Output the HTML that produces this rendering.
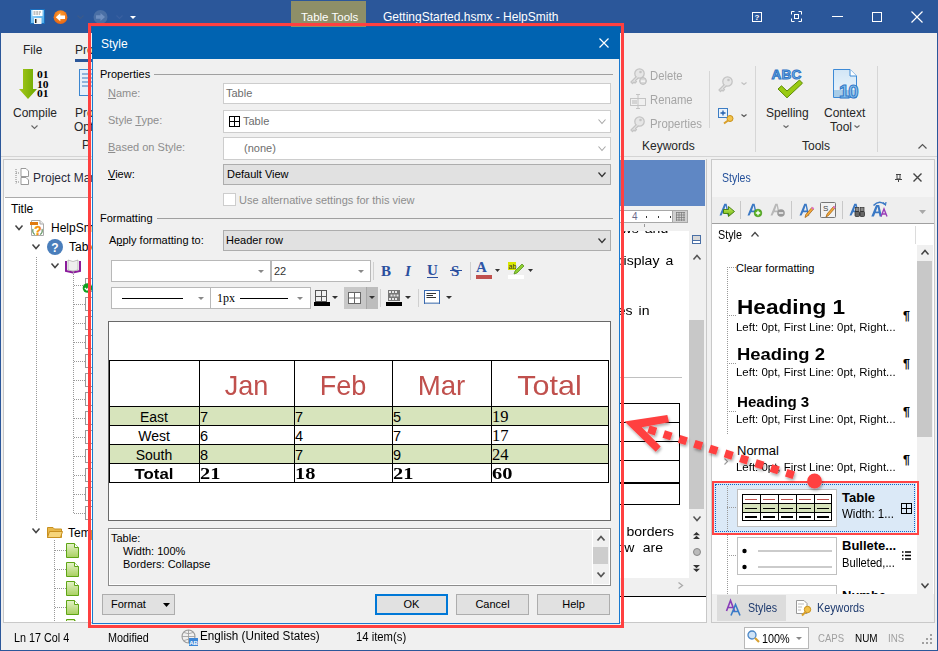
<!DOCTYPE html>
<html><head><meta charset="utf-8"><style>
html,body{margin:0;padding:0;}
body{width:938px;height:651px;overflow:hidden;position:relative;background:#f0f0f0;font-family:"Liberation Sans", sans-serif;}
.a{position:absolute;}
.t{position:absolute;white-space:nowrap;line-height:1;}
svg.a{overflow:visible;}
</style></head><body>

<div class="a" style="left:0px;top:0px;width:938px;height:33px;background:#2b579a;"></div>
<div class="a" style="left:0px;top:0px;width:1px;height:651px;background:#2b579a;"></div>
<div class="a" style="left:937px;top:0px;width:1px;height:651px;background:#2b579a;"></div>
<div class="a" style="left:0px;top:650px;width:938px;height:1px;background:#2b579a;"></div>
<svg class="a" style="left:30px;top:9px;" width="15" height="15" viewBox="0 0 15 15"><defs><linearGradient id="gsv" x1="0" y1="0" x2="1" y2="1"><stop offset="0" stop-color="#a8dcff"/><stop offset="1" stop-color="#4aa8e8"/></linearGradient></defs><rect x="0.5" y="0.5" width="14" height="14" fill="url(#gsv)" stroke="#1a70c0"/><rect x="2.5" y="1" width="10" height="6" fill="#fff"/><path d="M3.5 3 H11.5 M3.5 5 H10" stroke="#666" stroke-width="0.8" stroke-dasharray="2 0.7"/><rect x="4" y="9" width="7.5" height="6" fill="#f4f4f4"/><rect x="5" y="10" width="1.5" height="4" fill="#222"/></svg>
<svg class="a" style="left:53px;top:10px;" width="15" height="15" viewBox="0 0 15 15"><defs><radialGradient id="gbk" cx="0.5" cy="0.35" r="0.7"><stop offset="0" stop-color="#ffa030"/><stop offset="1" stop-color="#e45f10"/></radialGradient></defs><circle cx="7.5" cy="7.2" r="6.9" fill="url(#gbk)"/><path d="M2.8 7.2 L7.3 3.2 L7.3 5.5 L12 5.5 L12 8.9 L7.3 8.9 L7.3 11.2 Z" fill="#fff"/></svg>
<svg class="a" style="left:77px;top:15px;" width="7" height="4" viewBox="0 0 7 4"><path d="M0.5 0.5 L3.5 3.5 L6.5 0.5" fill="none" stroke="#3a5a8c" stroke-width="1.2"/></svg>
<svg class="a" style="left:93px;top:10px;" width="15" height="15" viewBox="0 0 15 15"><circle cx="7.5" cy="7" r="7" fill="#4a6fa5"/><path d="M12 7 L7.5 3 L7.5 5.3 L3 5.3 L3 8.7 L7.5 8.7 L7.5 11 Z" fill="#6f8fc0"/></svg>
<svg class="a" style="left:116px;top:15px;" width="7" height="4" viewBox="0 0 7 4"><path d="M0.5 0.5 L3.5 3.5 L6.5 0.5" fill="none" stroke="#3a60a0" stroke-width="1.1"/></svg>
<svg class="a" style="left:130px;top:16px;" width="6" height="3" viewBox="0 0 6 3"><path d="M0 0 L6 0 L3.0 3 Z" fill="#fff"/></svg>
<div class="a" style="left:291px;top:1px;width:75px;height:27px;background:#8e8f68;"></div>
<div class="t" style="left:301px;top:11.76px;font-size:11.5px;color:#fff;">Table Tools</div>
<div class="t" style="left:383px;top:10.84px;font-size:12px;color:#fff;">GettingStarted.hsmx - HelpSmith</div>
<svg class="a" style="left:752px;top:12px;" width="10" height="10" viewBox="0 0 10 10"><rect x="0.5" y="0.5" width="9" height="9" fill="none" stroke="#fff"/><text x="5" y="8" font-size="8" font-family="Liberation Sans" font-weight="bold" fill="#fff" text-anchor="middle">?</text></svg>
<svg class="a" style="left:791px;top:11px;" width="11" height="11" viewBox="0 0 11 11"><path d="M0.5 3.5 V0.5 H3.5 M7.5 0.5 H10.5 V3.5 M10.5 7.5 V10.5 H7.5 M3.5 10.5 H0.5 V7.5" fill="none" stroke="#fff"/><rect x="3.5" y="3.5" width="4" height="4" fill="none" stroke="#fff"/></svg>
<div class="a" style="left:832px;top:16px;width:11px;height:1px;background:#fff;"></div>
<svg class="a" style="left:872px;top:12px;" width="10" height="10" viewBox="0 0 10 10"><rect x="0.5" y="0.5" width="9" height="9" fill="none" stroke="#fff"/></svg>
<svg class="a" style="left:911px;top:11px;" width="12" height="12" viewBox="0 0 12 12"><path d="M0.5 0.5 L11.5 11.5 M11.5 0.5 L0.5 11.5" stroke="#fff" stroke-width="1.2"/></svg>
<div class="a" style="left:1px;top:33px;width:936px;height:123px;background:#f0f0f0;"></div>
<div class="a" style="left:1px;top:156px;width:936px;height:1px;background:#d4d4d4;"></div>
<div class="t" style="left:23px;top:43.84px;font-size:12px;color:#262626;">File</div>
<div class="t" style="left:75px;top:43.84px;font-size:12px;color:#262626;">Project</div>
<div class="a" style="left:75px;top:59px;width:40px;height:3px;background:#2b579a;"></div>
<svg class="a" style="left:19px;top:69px;" width="31" height="30" viewBox="0 0 31 30"><defs><linearGradient id="ga" x1="0" x2="1"><stop offset="0" stop-color="#a7c81a"/><stop offset="1" stop-color="#6aa800"/></linearGradient></defs><path d="M4 0 H14 V20 H18 L9 30 L0 20 H4 Z" fill="url(#ga)"/><g font-size="11" font-family="Liberation Serif" font-weight="bold" fill="#000" transform="translate(18,0) scale(1.05,1)"><text x="0" y="9">01</text><text x="0" y="18.6">10</text><text x="0" y="28.4">01</text></g></svg>
<div class="t" style="left:13px;top:106.84px;font-size:12px;color:#262626;">Compile</div>
<svg class="a" style="left:31px;top:125px;" width="7" height="4" viewBox="0 0 7 4"><path d="M0.5 0.5 L3.5 3.5 L6.5 0.5" fill="none" stroke="#666" stroke-width="1.1"/></svg>
<svg class="a" style="left:79px;top:69px;" width="14" height="30" viewBox="0 0 14 30"><rect x="0.5" y="0.5" width="13" height="26" fill="#e6f0fa" stroke="#3b86d0"/><rect x="3" y="4" width="10" height="2" fill="#8fb4dc"/><rect x="3" y="8" width="10" height="2" fill="#8fb4dc"/><rect x="3" y="12" width="10" height="2" fill="#8fb4dc"/><rect x="3" y="16" width="10" height="2" fill="#8fb4dc"/></svg>
<div class="t" style="left:75px;top:106.84px;font-size:12px;color:#262626;">Pro</div>
<div class="t" style="left:74px;top:120.84px;font-size:12px;color:#262626;">Opt</div>
<div class="t" style="left:82px;top:138.84px;font-size:12px;color:#262626;">P</div>
<svg class="a" style="left:630px;top:68px;" width="16" height="16" viewBox="0 0 16 16"><path d="M9.5 0.8 A4.7 4.7 0 1 1 9.5 10.2 A4.7 4.7 0 1 1 9.5 0.8 Z" fill="#e6e6e6" stroke="#c4c4c4" stroke-width="1.3"/><circle cx="10.5" cy="4" r="1.3" fill="#c4c4c4"/><path d="M6.5 8.5 L1 14 L2.5 15.5 L4 14 L5 15 L6.5 13.5 L5.5 12.5 L8.5 9.8" fill="#e6e6e6" stroke="#c4c4c4" stroke-width="1.3" stroke-linejoin="round"/></svg>
<svg class="a" style="left:639px;top:77px;" width="8" height="8" viewBox="0 0 8 8"><circle cx="4" cy="4" r="3.4" fill="#d8d8d8" stroke="#bdbdbd"/><rect x="2" y="3.5" width="4" height="1.2" fill="#fff"/></svg>
<div class="t" style="left:650px;top:69.84px;font-size:12px;color:#a6a6a6;transform:scaleX(0.94);transform-origin:0 0;">Delete</div>
<svg class="a" style="left:630px;top:94px;" width="16" height="15" viewBox="0 0 16 15"><rect x="0.5" y="4.5" width="15" height="7" fill="none" stroke="#c4c4c4"/><path d="M8 0.5 V14.5 M6 0.5 H10 M6 14.5 H10" stroke="#c4c4c4"/><rect x="2" y="6" width="5" height="4" fill="#d4d4d4"/></svg>
<div class="t" style="left:650px;top:93.84px;font-size:12px;color:#a6a6a6;transform:scaleX(0.94);transform-origin:0 0;">Rename</div>
<svg class="a" style="left:630px;top:116px;" width="16" height="16" viewBox="0 0 16 16"><path d="M9.5 0.8 A4.7 4.7 0 1 1 9.5 10.2 A4.7 4.7 0 1 1 9.5 0.8 Z" fill="#e6e6e6" stroke="#c4c4c4" stroke-width="1.3"/><circle cx="10.5" cy="4" r="1.3" fill="#c4c4c4"/><path d="M6.5 8.5 L1 14 L2.5 15.5 L4 14 L5 15 L6.5 13.5 L5.5 12.5 L8.5 9.8" fill="#e6e6e6" stroke="#c4c4c4" stroke-width="1.3" stroke-linejoin="round"/></svg>
<div class="t" style="left:650px;top:117.84px;font-size:12px;color:#a6a6a6;transform:scaleX(0.95);transform-origin:0 0;">Properties</div>
<div class="a" style="left:709px;top:71px;width:1px;height:57px;background:#d6d6d6;"></div>
<svg class="a" style="left:718px;top:76px;" width="16" height="16" viewBox="0 0 16 16"><path d="M9.5 0.8 A4.7 4.7 0 1 1 9.5 10.2 A4.7 4.7 0 1 1 9.5 0.8 Z" fill="#e6e6e6" stroke="#c4c4c4" stroke-width="1.3"/><circle cx="10.5" cy="4" r="1.3" fill="#c4c4c4"/><path d="M6.5 8.5 L1 14 L2.5 15.5 L4 14 L5 15 L6.5 13.5 L5.5 12.5 L8.5 9.8" fill="#e6e6e6" stroke="#c4c4c4" stroke-width="1.3" stroke-linejoin="round"/></svg>
<svg class="a" style="left:741px;top:82px;" width="6" height="3" viewBox="0 0 6 3"><path d="M0.5 0.5 L3.0 2.5 L5.5 0.5" fill="none" stroke="#c0c0c0" stroke-width="1.1"/></svg>
<svg class="a" style="left:718px;top:108px;" width="16" height="16" viewBox="0 0 16 16"><rect x="0.5" y="0.5" width="9" height="9" fill="#eaf2fb" stroke="#3c7dc4"/><path d="M5 2.5 V7.5 M2.5 5 H7.5" stroke="#1f5fae" stroke-width="1.3"/><circle cx="12" cy="10.5" r="3" fill="#f3c34a" stroke="#c8901a"/><path d="M10 12.5 L6 15.5" stroke="#d89f2a" stroke-width="2"/></svg>
<svg class="a" style="left:741px;top:114px;" width="6" height="3" viewBox="0 0 6 3"><path d="M0.5 0.5 L3.0 2.5 L5.5 0.5" fill="none" stroke="#555" stroke-width="1.2"/></svg>
<div class="t" style="left:642px;top:139.84px;font-size:12px;color:#262626;">Keywords</div>
<div class="a" style="left:755px;top:66px;width:1px;height:86px;background:#d6d6d6;"></div>
<svg class="a" style="left:771px;top:68px;" width="32" height="32" viewBox="0 0 32 32"><text x="15.5" y="11" font-size="13.5" font-family="Liberation Sans" font-weight="bold" fill="#7cb8ee" stroke="#2f74c4" stroke-width="1" text-anchor="middle" letter-spacing="0.3">ABC</text><path d="M7 21 L10.5 17.8 L16 23 L28.5 12 L31.5 15.2 L16 29.8 Z" fill="#9acb12" stroke="#5f8c08" stroke-width="1" stroke-linejoin="round"/></svg>
<div class="t" style="left:766px;top:106.84px;font-size:12px;color:#262626;">Spelling</div>
<svg class="a" style="left:783px;top:125px;" width="6" height="3" viewBox="0 0 6 3"><path d="M0.5 0.5 L3.0 2.5 L5.5 0.5" fill="none" stroke="#666" stroke-width="1.1"/></svg>
<svg class="a" style="left:833px;top:69px;" width="28" height="31" viewBox="0 0 28 31"><defs><linearGradient id="gct" x1="0" y1="0" x2="0" y2="1"><stop offset="0" stop-color="#d2e6f6"/><stop offset="1" stop-color="#eef6fc"/></linearGradient></defs><path d="M0.5 0.5 H17 L23.5 7 V28.5 H0.5 Z" fill="url(#gct)" stroke="#3d8ad6"/><path d="M17 0.5 V7 H23.5" fill="#fff" stroke="#3d8ad6"/><rect x="1" y="21" width="22" height="7" fill="#a8cde8"/><text x="6" y="28.8" font-size="18.5" font-family="Liberation Sans" font-weight="bold" fill="#8cc4ee" stroke="#2f78c8" stroke-width="1" letter-spacing="-1">10</text></svg>
<div class="t" style="left:824px;top:106.84px;font-size:12px;color:#262626;">Context</div>
<div class="t" style="left:830px;top:120.84px;font-size:12px;color:#262626;">Tool</div>
<svg class="a" style="left:854px;top:125px;" width="6" height="3" viewBox="0 0 6 3"><path d="M0.5 0.5 L3.0 2.5 L5.5 0.5" fill="none" stroke="#666" stroke-width="1.1"/></svg>
<div class="t" style="left:802px;top:139.84px;font-size:12px;color:#262626;">Tools</div>
<div class="a" style="left:877px;top:66px;width:1px;height:86px;background:#d6d6d6;"></div>
<svg class="a" style="left:918px;top:144px;" width="9" height="5" viewBox="0 0 9 5"><path d="M0.5 4.5 L4.5 0.5 L8.5 4.5" fill="none" stroke="#555" stroke-width="1.2"/></svg>
<div class="a" style="left:3px;top:159px;width:620px;height:464px;background:#fff;border:1px solid #c9c9c9;box-sizing:border-box;"></div>
<div class="a" style="left:4px;top:160px;width:618px;height:37px;background:#f5f5f5;"></div>
<div class="a" style="left:5px;top:197px;width:616px;height:1px;background:#ababab;"></div>
<svg class="a" style="left:15px;top:168px;" width="14" height="17" viewBox="0 0 14 17"><path d="M1 1 V15.5 M1 5 H4 M1 14 H4" stroke="#888" stroke-dasharray="1 1"/><path d="M6 0.5 H11 L13.5 3 V8.5 H6 Z" fill="#fff" stroke="#999"/><path d="M6 9.5 H11 L13.5 12 V16.5 H6 Z" fill="#fff" stroke="#999"/></svg>
<div class="t" style="left:33px;top:171.84px;font-size:12px;color:#2a2a3a;">Project Manager</div>
<div class="t" style="left:11px;top:202.84px;font-size:12px;color:#000;">Title</div>
<svg class="a" style="left:15px;top:225px;" width="8" height="5" viewBox="0 0 8 5"><path d="M0.5 0.5 L4.0 4.5 L7.5 0.5" fill="none" stroke="#444" stroke-width="1.5"/></svg>
<svg class="a" style="left:29px;top:219px;" width="16" height="18" viewBox="0 0 16 18"><path d="M2.5 1.5 H11 L14.5 5 V16.5 H2.5 Z" fill="#fff" stroke="#aaa"/><path d="M11 1.5 V5 H14.5" fill="#eee" stroke="#aaa"/><path d="M4 10 Q3 14 6 15.5 M13 10 Q14 14 11 15.5" fill="none" stroke="#6a9a6a" stroke-width="1.3"/><rect x="1" y="3" width="8" height="3" fill="#e07a10"/><text x="9" y="16" font-size="12" font-weight="bold" font-family="Liberation Sans" fill="#f07a10" stroke="#f8b020" stroke-width="0.4" text-anchor="middle">?</text></svg>
<div class="t" style="left:51px;top:221.84px;font-size:12px;color:#000;">HelpSmith</div>
<svg class="a" style="left:32px;top:244px;" width="8" height="5" viewBox="0 0 8 5"><path d="M0.5 0.5 L4.0 4.5 L7.5 0.5" fill="none" stroke="#444" stroke-width="1.5"/></svg>
<svg class="a" style="left:47px;top:239px;" width="16" height="16" viewBox="0 0 16 16"><circle cx="8" cy="8" r="8" fill="#4a7ebb"/><text x="8" y="12.5" font-size="12" font-weight="bold" font-family="Liberation Sans" fill="#fff" text-anchor="middle">?</text></svg>
<div class="t" style="left:69px;top:240.84px;font-size:12px;color:#000;">Table of Contents</div>
<div class="a" style="left:36px;top:257px;width:1px;height:264px;background-image:linear-gradient(#999 50%, transparent 50%);background-size:1px 2px;"></div>
<svg class="a" style="left:51px;top:263px;" width="8" height="5" viewBox="0 0 8 5"><path d="M0.5 0.5 L4.0 4.5 L7.5 0.5" fill="none" stroke="#444" stroke-width="1.5"/></svg>
<svg class="a" style="left:65px;top:259px;" width="16" height="14" viewBox="0 0 16 14"><path d="M1 2 V12 L8 13.5 L15 12 V2" fill="none" stroke="#8b1c9c" stroke-width="2"/><path d="M3 1 L8 2.5 L13 1 V11 L8 12 L3 11 Z" fill="#eee" stroke="#999" stroke-width="0.6"/></svg>
<div class="a" style="left:73px;top:272px;width:1px;height:241px;background-image:linear-gradient(#999 50%, transparent 50%);background-size:1px 2px;"></div>
<div class="a" style="left:74px;top:285px;width:12px;height:1px;background-image:linear-gradient(90deg,#999 50%, transparent 50%);background-size:2px 1px;"></div>
<div class="a" style="left:85px;top:278px;width:8px;height:14px;background:#fff;border:1px solid #999;box-sizing:border-box;"></div>
<div class="a" style="left:74px;top:304px;width:12px;height:1px;background-image:linear-gradient(90deg,#999 50%, transparent 50%);background-size:2px 1px;"></div>
<div class="a" style="left:85px;top:297px;width:8px;height:14px;background:#fff;border:1px solid #999;box-sizing:border-box;"></div>
<div class="a" style="left:74px;top:323px;width:12px;height:1px;background-image:linear-gradient(90deg,#999 50%, transparent 50%);background-size:2px 1px;"></div>
<div class="a" style="left:85px;top:316px;width:8px;height:14px;background:#fff;border:1px solid #999;box-sizing:border-box;"></div>
<div class="a" style="left:74px;top:342px;width:12px;height:1px;background-image:linear-gradient(90deg,#999 50%, transparent 50%);background-size:2px 1px;"></div>
<div class="a" style="left:85px;top:335px;width:8px;height:14px;background:#fff;border:1px solid #999;box-sizing:border-box;"></div>
<div class="a" style="left:74px;top:361px;width:12px;height:1px;background-image:linear-gradient(90deg,#999 50%, transparent 50%);background-size:2px 1px;"></div>
<div class="a" style="left:85px;top:354px;width:8px;height:14px;background:#fff;border:1px solid #999;box-sizing:border-box;"></div>
<div class="a" style="left:74px;top:380px;width:12px;height:1px;background-image:linear-gradient(90deg,#999 50%, transparent 50%);background-size:2px 1px;"></div>
<div class="a" style="left:85px;top:373px;width:8px;height:14px;background:#fff;border:1px solid #999;box-sizing:border-box;"></div>
<div class="a" style="left:74px;top:399px;width:12px;height:1px;background-image:linear-gradient(90deg,#999 50%, transparent 50%);background-size:2px 1px;"></div>
<div class="a" style="left:85px;top:392px;width:8px;height:14px;background:#fff;border:1px solid #999;box-sizing:border-box;"></div>
<div class="a" style="left:74px;top:418px;width:12px;height:1px;background-image:linear-gradient(90deg,#999 50%, transparent 50%);background-size:2px 1px;"></div>
<div class="a" style="left:85px;top:411px;width:8px;height:14px;background:#fff;border:1px solid #999;box-sizing:border-box;"></div>
<div class="a" style="left:74px;top:437px;width:12px;height:1px;background-image:linear-gradient(90deg,#999 50%, transparent 50%);background-size:2px 1px;"></div>
<div class="a" style="left:85px;top:430px;width:8px;height:14px;background:#fff;border:1px solid #999;box-sizing:border-box;"></div>
<div class="a" style="left:74px;top:456px;width:12px;height:1px;background-image:linear-gradient(90deg,#999 50%, transparent 50%);background-size:2px 1px;"></div>
<div class="a" style="left:85px;top:449px;width:8px;height:14px;background:#fff;border:1px solid #999;box-sizing:border-box;"></div>
<div class="a" style="left:74px;top:475px;width:12px;height:1px;background-image:linear-gradient(90deg,#999 50%, transparent 50%);background-size:2px 1px;"></div>
<div class="a" style="left:85px;top:468px;width:8px;height:14px;background:#fff;border:1px solid #999;box-sizing:border-box;"></div>
<div class="a" style="left:74px;top:494px;width:12px;height:1px;background-image:linear-gradient(90deg,#999 50%, transparent 50%);background-size:2px 1px;"></div>
<div class="a" style="left:85px;top:487px;width:8px;height:14px;background:#fff;border:1px solid #999;box-sizing:border-box;"></div>
<div class="a" style="left:74px;top:513px;width:12px;height:1px;background-image:linear-gradient(90deg,#999 50%, transparent 50%);background-size:2px 1px;"></div>
<div class="a" style="left:85px;top:506px;width:8px;height:14px;background:#fff;border:1px solid #999;box-sizing:border-box;"></div>
<svg class="a" style="left:82px;top:283px;" width="11" height="11" viewBox="0 0 11 11"><circle cx="5.5" cy="5" r="4.8" fill="#10a020"/><path d="M2.8 5 L5 7 L8 3" fill="none" stroke="#fff" stroke-width="1.3"/></svg>
<svg class="a" style="left:32px;top:528px;" width="8" height="5" viewBox="0 0 8 5"><path d="M0.5 0.5 L4.0 4.5 L7.5 0.5" fill="none" stroke="#444" stroke-width="1.5"/></svg>
<svg class="a" style="left:47px;top:526px;" width="16" height="12" viewBox="0 0 16 12"><path d="M0.5 1.5 H6 L7.5 3 H14.5 V11.5 H0.5 Z" fill="#e8b84a" stroke="#c89020"/><path d="M2.5 5.5 H15.5 L13.5 11.5 H0.5 Z" fill="#f7d57a" stroke="#c89020"/></svg>
<div class="t" style="left:68px;top:526.84px;font-size:12px;color:#000;">Templates</div>
<div class="a" style="left:54px;top:540px;width:1px;height:81px;background-image:linear-gradient(#999 50%, transparent 50%);background-size:1px 2px;"></div>
<div class="a" style="left:55px;top:550px;width:11px;height:1px;background-image:linear-gradient(90deg,#999 50%, transparent 50%);background-size:2px 1px;"></div>
<div class="a" style="left:66px;top:543px;width:14px;height:15px;overflow:hidden;">
<svg class="a" style="left:0px;top:0px;" width="13" height="15" viewBox="0 0 13 15"><defs><linearGradient id="gp" x1="0" y1="0" x2="0" y2="1"><stop offset="0" stop-color="#e4f2c8"/><stop offset="1" stop-color="#a8d060"/></linearGradient></defs><path d="M0.5 0.5 H8.5 L12.5 4.5 V14.5 H0.5 Z" fill="url(#gp)" stroke="#5ea514"/><path d="M8.5 0.5 V4.5 H12.5" fill="#fff" stroke="#5ea514"/></svg>
</div>
<div class="a" style="left:55px;top:569px;width:11px;height:1px;background-image:linear-gradient(90deg,#999 50%, transparent 50%);background-size:2px 1px;"></div>
<div class="a" style="left:66px;top:562px;width:14px;height:15px;overflow:hidden;">
<svg class="a" style="left:0px;top:0px;" width="13" height="15" viewBox="0 0 13 15"><defs><linearGradient id="gp" x1="0" y1="0" x2="0" y2="1"><stop offset="0" stop-color="#e4f2c8"/><stop offset="1" stop-color="#a8d060"/></linearGradient></defs><path d="M0.5 0.5 H8.5 L12.5 4.5 V14.5 H0.5 Z" fill="url(#gp)" stroke="#5ea514"/><path d="M8.5 0.5 V4.5 H12.5" fill="#fff" stroke="#5ea514"/></svg>
</div>
<div class="a" style="left:55px;top:588px;width:11px;height:1px;background-image:linear-gradient(90deg,#999 50%, transparent 50%);background-size:2px 1px;"></div>
<div class="a" style="left:66px;top:581px;width:14px;height:15px;overflow:hidden;">
<svg class="a" style="left:0px;top:0px;" width="13" height="15" viewBox="0 0 13 15"><defs><linearGradient id="gp" x1="0" y1="0" x2="0" y2="1"><stop offset="0" stop-color="#e4f2c8"/><stop offset="1" stop-color="#a8d060"/></linearGradient></defs><path d="M0.5 0.5 H8.5 L12.5 4.5 V14.5 H0.5 Z" fill="url(#gp)" stroke="#5ea514"/><path d="M8.5 0.5 V4.5 H12.5" fill="#fff" stroke="#5ea514"/></svg>
</div>
<div class="a" style="left:55px;top:607px;width:11px;height:1px;background-image:linear-gradient(90deg,#999 50%, transparent 50%);background-size:2px 1px;"></div>
<div class="a" style="left:66px;top:600px;width:14px;height:15px;overflow:hidden;">
<svg class="a" style="left:0px;top:0px;" width="13" height="15" viewBox="0 0 13 15"><defs><linearGradient id="gp" x1="0" y1="0" x2="0" y2="1"><stop offset="0" stop-color="#e4f2c8"/><stop offset="1" stop-color="#a8d060"/></linearGradient></defs><path d="M0.5 0.5 H8.5 L12.5 4.5 V14.5 H0.5 Z" fill="url(#gp)" stroke="#5ea514"/><path d="M8.5 0.5 V4.5 H12.5" fill="#fff" stroke="#5ea514"/></svg>
</div>
<div class="a" style="left:66px;top:619px;width:14px;height:2px;overflow:hidden;">
<svg class="a" style="left:0px;top:0px;" width="13" height="15" viewBox="0 0 13 15"><defs><linearGradient id="gp" x1="0" y1="0" x2="0" y2="1"><stop offset="0" stop-color="#e4f2c8"/><stop offset="1" stop-color="#a8d060"/></linearGradient></defs><path d="M0.5 0.5 H8.5 L12.5 4.5 V14.5 H0.5 Z" fill="url(#gp)" stroke="#5ea514"/><path d="M8.5 0.5 V4.5 H12.5" fill="#fff" stroke="#5ea514"/></svg>
</div>
<div class="a" style="left:560px;top:159px;width:147px;height:464px;background:#f0f0f0;"></div>
<div class="a" style="left:560px;top:160px;width:145px;height:46px;background:#5f87c4;"></div>
<div class="a" style="left:706px;top:159px;width:1px;height:464px;background:#c8c8c8;"></div>
<div class="a" style="left:560px;top:210px;width:113px;height:13px;background:#fff;border:1px solid #a8a8a8;box-sizing:border-box;"></div>
<div class="t" style="left:632px;top:211.53px;font-size:10px;color:#6b6b8a;">4</div>
<div class="a" style="left:646px;top:216px;width:1px;height:2px;background:#333;"></div>
<div class="a" style="left:658px;top:216px;width:1px;height:2px;background:#333;"></div>
<div class="a" style="left:670px;top:216px;width:1px;height:2px;background:#333;"></div>
<div class="a" style="left:672px;top:210px;width:16px;height:13px;background:#d0d0d0;border:1px solid #a8a8a8;box-sizing:border-box;"></div>
<svg class="a" style="left:676px;top:212px;" width="9" height="9" viewBox="0 0 9 9"><path d="M0 0.5 H9 M0 3 H9 M0 5.5 H9 M0 8 H9 M0.5 0 V9 M3 0 V9 M5.5 0 V9 M8 0 V9" stroke="#777" stroke-width="0.7"/></svg>
<div class="a" style="left:644px;top:224px;width:1px;height:3px;background:#999;"></div>
<div class="a" style="left:560px;top:231px;width:129px;height:347px;overflow:hidden;background:#fff;"><div class="t" style="right:21px;top:-9px;font-size:13px;word-spacing:2px;transform:scaleX(1.08);transform-origin:100% 0;">ws and</div><div class="t" style="right:16px;top:22.6px;font-size:13px;word-spacing:2px;transform:scaleX(1.08);transform-origin:100% 0;">display a</div><div class="t" style="right:40px;top:72.5px;font-size:13px;word-spacing:2px;transform:scaleX(1.08);transform-origin:100% 0;">es in</div><div class="t" style="right:15px;top:293.6px;font-size:13px;transform:scaleX(1.08);transform-origin:100% 0;">borders</div><div class="t" style="right:26px;top:309.6px;font-size:13px;word-spacing:4px;transform:scaleX(1.08);transform-origin:100% 0;">ow are</div></div>
<div class="a" style="left:560px;top:377px;width:122px;height:1px;background:#c0c0c0;"></div>
<div class="a" style="left:560px;top:403px;width:120px;height:102px;border:1px solid #000;box-sizing:border-box;"></div>
<div class="a" style="left:560px;top:422px;width:120px;height:1px;background:#000;"></div>
<div class="a" style="left:560px;top:441px;width:120px;height:1px;background:#000;"></div>
<div class="a" style="left:560px;top:460px;width:120px;height:1px;background:#000;"></div>
<div class="a" style="left:560px;top:482px;width:120px;height:2px;background:#000;"></div>
<div class="a" style="left:689px;top:230px;width:16px;height:364px;background:#f0f0f0;"></div>
<svg class="a" style="left:692px;top:235px;" width="9" height="9" viewBox="0 0 9 9"><rect x="0.5" y="0.5" width="8" height="8" fill="#d8d8d8" stroke="#4a6fa5"/><path d="M1 5.5 H8" stroke="#4a6fa5"/><rect x="1" y="6" width="7" height="2" fill="#fff"/></svg>
<svg class="a" style="left:693px;top:255px;" width="8" height="5" viewBox="0 0 8 5"><path d="M0.5 4.5 L4.0 0.5 L7.5 4.5" fill="none" stroke="#555" stroke-width="1.5"/></svg>
<div class="a" style="left:689px;top:320px;width:15px;height:189px;background:#c8c8c8;"></div>
<svg class="a" style="left:693px;top:516px;" width="8" height="5" viewBox="0 0 8 5"><path d="M0.5 0.5 L4.0 4.5 L7.5 0.5" fill="none" stroke="#555" stroke-width="1.5"/></svg>
<svg class="a" style="left:693px;top:532px;" width="7" height="7" viewBox="0 0 7 7"><path d="M0 3.2 L3.5 0 L7 3.2 Z M0 7 L3.5 3.8 L7 7 Z" fill="#333"/></svg>
<svg class="a" style="left:693px;top:548px;" width="8" height="8" viewBox="0 0 8 8"><circle cx="4" cy="4" r="3.5" fill="#bbb" stroke="#888"/></svg>
<svg class="a" style="left:693px;top:565px;" width="7" height="7" viewBox="0 0 7 7"><path d="M0 0 L3.5 3.2 L7 0 Z M0 3.8 L3.5 7 L7 3.8 Z" fill="#333"/></svg>
<svg class="a" style="left:678px;top:582px;" width="5" height="7" viewBox="0 0 5 7"><path d="M0.5 0.5 L4.5 3.5 L0.5 6.5" fill="none" stroke="#aaa" stroke-width="1.3"/></svg>
<div class="a" style="left:560px;top:596px;width:146px;height:1px;background:#000;"></div>
<div class="a" style="left:560px;top:597px;width:146px;height:25px;background:#fff;"></div>
<div class="a" style="left:560px;top:622px;width:147px;height:1px;background:#c8c8c8;"></div>
<div class="a" style="left:711px;top:159px;width:224px;height:464px;background:#fff;border:1px solid #c9c9c9;box-sizing:border-box;"></div>
<div class="a" style="left:712px;top:160px;width:222px;height:37px;background:#f5f5f5;"></div>
<div class="t" style="left:722px;top:171.84px;font-size:12px;color:#24509a;transform:scaleX(0.88);transform-origin:0 0;">Styles</div>
<svg class="a" style="left:895px;top:174px;" width="7" height="8" viewBox="0 0 7 8"><path d="M1 0.5 H6 M2 0.5 V5 H5 V0.5 M0 5.5 H7 M3.5 5.5 V8" fill="none" stroke="#444" stroke-width="1"/></svg>
<svg class="a" style="left:913px;top:173px;" width="9" height="9" viewBox="0 0 9 9"><path d="M0.5 0.5 L8.5 8.5 M8.5 0.5 L0.5 8.5" stroke="#444" stroke-width="1.4"/></svg>
<div class="a" style="left:712px;top:197px;width:222px;height:26px;background:#eeeeee;"></div>
<div class="a" style="left:712px;top:223px;width:222px;height:1px;background:#a0a0a0;"></div>
<svg class="a" style="left:719px;top:203px;" width="12" height="13" viewBox="0 0 12 13"><path d="M0.5 12.5 L5.3 0.8 H7.6 L10.2 12.5 H8.6 L7.9 9.2 H4.1 L2.5 12.5 Z M4.9 7.6 H7.6 L6.7 2.5 Z" fill="#3a78c4" fill-rule="evenodd"/></svg>
<svg class="a" style="left:723px;top:206px;" width="12" height="11" viewBox="0 0 12 11"><defs><linearGradient id="gar" x1="0" y1="0" x2="0" y2="1"><stop offset="0" stop-color="#c8f060"/><stop offset="1" stop-color="#6cb010"/></linearGradient></defs><path d="M0.5 3.5 H5.5 V0.5 L11.5 5.5 L5.5 10.5 V7.5 H0.5 Z" fill="url(#gar)" stroke="#3d7a0a" stroke-width="0.9"/></svg>
<div class="a" style="left:740px;top:201px;width:1px;height:18px;background:#c8c8c8;"></div>
<svg class="a" style="left:747px;top:203px;" width="12" height="13" viewBox="0 0 12 13"><path d="M0.5 12.5 L5.3 0.8 H7.6 L10.2 12.5 H8.6 L7.9 9.2 H4.1 L2.5 12.5 Z M4.9 7.6 H7.6 L6.7 2.5 Z" fill="#3a78c4" fill-rule="evenodd"/></svg>
<svg class="a" style="left:754px;top:209px;" width="8" height="8" viewBox="0 0 8 8"><circle cx="4" cy="4" r="3.8" fill="#5ab424" stroke="#3d8a10" stroke-width="0.6"/><path d="M4 1.8 V6.2 M1.8 4 H6.2" stroke="#fff" stroke-width="1.3"/></svg>
<svg class="a" style="left:770px;top:203px;" width="12" height="13" viewBox="0 0 12 13"><path d="M0.5 12.5 L5.3 0.8 H7.6 L10.2 12.5 H8.6 L7.9 9.2 H4.1 L2.5 12.5 Z M4.9 7.6 H7.6 L6.7 2.5 Z" fill="#b8b8b8" fill-rule="evenodd"/></svg>
<svg class="a" style="left:777px;top:209px;" width="8" height="8" viewBox="0 0 8 8"><circle cx="4" cy="4" r="3.8" fill="#9a9a9a"/><path d="M1.8 4 H6.2" stroke="#fff" stroke-width="1.3"/></svg>
<div class="a" style="left:791px;top:201px;width:1px;height:18px;background:#c8c8c8;"></div>
<svg class="a" style="left:799px;top:203px;" width="12" height="13" viewBox="0 0 12 13"><path d="M0.5 12.5 L5.3 0.8 H7.6 L10.2 12.5 H8.6 L7.9 9.2 H4.1 L2.5 12.5 Z M4.9 7.6 H7.6 L6.7 2.5 Z" fill="#3a78c4" fill-rule="evenodd"/></svg>
<svg class="a" style="left:804px;top:206px;" width="10" height="12" viewBox="0 0 10 12"><path d="M1 11.5 L1.8 8.5 L7.8 1.5 L9.6 3 L3.6 10 Z" fill="#f3a93a" stroke="#9a5a10" stroke-width="0.7"/><path d="M7.8 1.5 L9.6 3" stroke="#e070c8" stroke-width="2"/></svg>
<svg class="a" style="left:820px;top:202px;" width="16" height="16" viewBox="0 0 16 16"><rect x="0.5" y="0.5" width="15" height="15" rx="1" fill="#f2f2f2" stroke="#777"/><text x="3" y="8.5" font-size="8" font-family="Liberation Sans" fill="#444">S</text><path d="M6 15 L7 12 L13.5 4.5 L15 6 L8.5 13.5 Z" fill="#f3a93a" stroke="#9a5a10" stroke-width="0.7"/><path d="M13.5 4.5 L15 6" stroke="#e070c8" stroke-width="2"/></svg>
<div class="a" style="left:842px;top:201px;width:1px;height:18px;background:#c8c8c8;"></div>
<svg class="a" style="left:849px;top:203px;" width="12" height="13" viewBox="0 0 12 13"><path d="M0.5 12.5 L5.3 0.8 H7.6 L10.2 12.5 H8.6 L7.9 9.2 H4.1 L2.5 12.5 Z M4.9 7.6 H7.6 L6.7 2.5 Z" fill="#3a78c4" fill-rule="evenodd"/></svg>
<svg class="a" style="left:855px;top:207px;" width="10" height="10" viewBox="0 0 10 10"><rect x="0.5" y="0.5" width="3.5" height="4" fill="#888" stroke="#333" stroke-width="0.7"/><rect x="5.5" y="0.5" width="3.5" height="4" fill="#888" stroke="#333" stroke-width="0.7"/><rect x="0" y="4.5" width="4.5" height="5" rx="1" fill="#666" stroke="#222" stroke-width="0.7"/><rect x="5" y="4.5" width="4.5" height="5" rx="1" fill="#666" stroke="#222" stroke-width="0.7"/></svg>
<svg class="a" style="left:871px;top:201px;" width="17" height="16" viewBox="0 0 17 16"><path d="M2.5 4.5 Q8 -1.5 14 3.5" fill="none" stroke="#3a78c4" stroke-width="1.6"/><path d="M12 1.5 L14.5 4 L15 1" fill="none" stroke="#3a78c4" stroke-width="1.2"/><path d="M0.3 15.5 L5 4 H8.2 L11 15.5 H8.6 L7.9 12.3 H4.2 L2.9 15.5 Z M4.9 10.4 H7.5 L6.6 5.8 Z" fill="#3a78c4" fill-rule="evenodd"/><path d="M10 15.5 L13 8 L16 15.5 M11 13 H15" fill="none" stroke="#9a3cb8" stroke-width="1.4"/></svg>
<svg class="a" style="left:919px;top:210px;" width="7" height="4" viewBox="0 0 7 4"><path d="M0 0 L7 0 L3.5 4 Z" fill="#a8a8a8"/></svg>
<div class="t" style="left:718px;top:228.84px;font-size:12px;color:#000;transform:scaleX(0.9);transform-origin:0 0;">Style</div>
<svg class="a" style="left:751px;top:232px;" width="8" height="5" viewBox="0 0 8 5"><path d="M0.5 4.5 L4.0 0.5 L7.5 4.5" fill="none" stroke="#444" stroke-width="1.2"/></svg>
<div class="a" style="left:915px;top:226px;width:1px;height:18px;background:#dcdcdc;"></div>
<div class="a" style="left:917px;top:245px;width:16px;height:350px;background:#f0f0f0;"></div>
<svg class="a" style="left:921px;top:250px;" width="8" height="5" viewBox="0 0 8 5"><path d="M0.5 4.5 L4.0 0.5 L7.5 4.5" fill="none" stroke="#444" stroke-width="1.5"/></svg>
<div class="a" style="left:917px;top:261px;width:15px;height:176px;background:#c8c8c8;"></div>
<svg class="a" style="left:921px;top:583px;" width="8" height="5" viewBox="0 0 8 5"><path d="M0.5 0.5 L4.0 4.5 L7.5 0.5" fill="none" stroke="#444" stroke-width="1.5"/></svg>
<div class="a" style="left:727px;top:267px;width:1px;height:168px;background-image:linear-gradient(#999 50%, transparent 50%);background-size:1px 2px;"></div>
<div class="a" style="left:727px;top:267px;width:9px;height:1px;background-image:linear-gradient(90deg,#999 50%, transparent 50%);background-size:2px 1px;"></div>
<div class="a" style="left:727px;top:315px;width:10px;height:1px;background-image:linear-gradient(90deg,#999 50%, transparent 50%);background-size:2px 1px;"></div>
<div class="a" style="left:727px;top:363px;width:10px;height:1px;background-image:linear-gradient(90deg,#999 50%, transparent 50%);background-size:2px 1px;"></div>
<div class="a" style="left:727px;top:411px;width:10px;height:1px;background-image:linear-gradient(90deg,#999 50%, transparent 50%);background-size:2px 1px;"></div>
<div class="t" style="left:736px;top:262.69px;font-size:11px;color:#000;">Clear formatting</div>
<div class="t" style="left:737px;top:298.49px;font-size:19.5px;color:#000;font-weight:bold;transform:scaleX(1.16);transform-origin:0 0;">Heading 1</div>
<div class="t" style="left:736px;top:321.69px;font-size:11px;color:#000;transform:scaleX(1.04);transform-origin:0 0;">Left: 0pt, First Line: 0pt, Right...</div>
<div class="t" style="left:903px;top:310.42px;font-size:12.5px;color:#000;font-weight:bold;">&para;</div>
<div class="t" style="left:737px;top:347.45px;font-size:16px;color:#000;font-weight:bold;transform:scaleX(1.15);transform-origin:0 0;">Heading 2</div>
<div class="t" style="left:736px;top:366.69px;font-size:11px;color:#000;transform:scaleX(1.04);transform-origin:0 0;">Left: 0pt, First Line: 0pt, Right...</div>
<div class="t" style="left:903px;top:358.42px;font-size:12.5px;color:#000;font-weight:bold;">&para;</div>
<div class="t" style="left:737px;top:395.15px;font-size:14px;color:#000;font-weight:bold;transform:scaleX(1.08);transform-origin:0 0;">Heading 3</div>
<div class="t" style="left:736px;top:413.69px;font-size:11px;color:#000;transform:scaleX(1.04);transform-origin:0 0;">Left: 0pt, First Line: 0pt, Right...</div>
<div class="t" style="left:903px;top:406.42px;font-size:12.5px;color:#000;font-weight:bold;">&para;</div>
<div class="t" style="left:737px;top:443.99px;font-size:13px;color:#000;">Normal</div>
<svg class="a" style="left:724px;top:458px;" width="4" height="7" viewBox="0 0 4 7"><path d="M0.5 0.5 L3.5 3.5 L0.5 6.5" fill="none" stroke="#999" stroke-width="1.1"/></svg>
<div class="t" style="left:736px;top:461.69px;font-size:11px;color:#000;transform:scaleX(1.04);transform-origin:0 0;">Left: 0pt, First Line: 0pt, Right...</div>
<div class="t" style="left:903px;top:454.42px;font-size:12.5px;color:#000;font-weight:bold;">&para;</div>
<div class="a" style="left:714px;top:483px;width:202px;height:50px;background:#dbe9f7;"></div>
<div class="a" style="left:715px;top:484px;width:200px;height:48px;border:1px dotted #0a64c8;box-sizing:border-box;"></div>
<div class="a" style="left:727px;top:486px;width:1px;height:46px;background-image:linear-gradient(#999 50%, transparent 50%);background-size:1px 2px;"></div>
<div class="a" style="left:727px;top:507px;width:10px;height:1px;background-image:linear-gradient(90deg,#999 50%, transparent 50%);background-size:2px 1px;"></div>
<div class="a" style="left:737px;top:489px;width:100px;height:38px;background:#fff;border:1px solid #c0c0c0;box-sizing:border-box;"></div>
<svg class="a" style="left:742px;top:494px;" width="90" height="27" viewBox="0 0 90 27"><rect x="0.5" y="0.5" width="89" height="26" fill="#fff" stroke="#000"/><rect x="1" y="10" width="88" height="8" fill="#d6e3bc"/><path d="M18.5 0 V27" stroke="#000"/><path d="M36.5 0 V27" stroke="#000"/><path d="M54.5 0 V27" stroke="#000"/><path d="M72.5 0 V27" stroke="#000"/><path d="M0 9.5 H90 M0 18.5 H90" stroke="#000"/><path d="M3 5.5 H15" stroke="#c0504d" stroke-width="1"/><path d="M3 14.5 H15" stroke="#000" stroke-width="1"/><path d="M3 23 H15" stroke="#000" stroke-width="2"/><path d="M21 5.5 H33" stroke="#c0504d" stroke-width="1"/><path d="M21 14.5 H33" stroke="#000" stroke-width="1"/><path d="M21 23 H33" stroke="#000" stroke-width="2"/><path d="M39 5.5 H51" stroke="#c0504d" stroke-width="1"/><path d="M39 14.5 H51" stroke="#000" stroke-width="1"/><path d="M39 23 H51" stroke="#000" stroke-width="2"/><path d="M57 5.5 H69" stroke="#c0504d" stroke-width="1"/><path d="M57 14.5 H69" stroke="#000" stroke-width="1"/><path d="M57 23 H69" stroke="#000" stroke-width="2"/><path d="M75 5.5 H87" stroke="#c0504d" stroke-width="1"/><path d="M75 14.5 H87" stroke="#000" stroke-width="1"/><path d="M75 23 H87" stroke="#000" stroke-width="2"/></svg>
<div class="t" style="left:842px;top:490.99px;font-size:13px;color:#000;font-weight:bold;">Table</div>
<div class="t" style="left:842px;top:508.34px;font-size:12px;color:#000;transform:scaleX(0.96);transform-origin:0 0;">Width: 1...</div>
<svg class="a" style="left:901px;top:503px;" width="11" height="11" viewBox="0 0 11 11"><rect x="0.5" y="0.5" width="10" height="10" fill="none" stroke="#000"/><path d="M5.5 0 V11 M0 5.5 H11" stroke="#000"/></svg>
<div class="a" style="left:727px;top:535px;width:1px;height:60px;background-image:linear-gradient(#999 50%, transparent 50%);background-size:1px 2px;"></div>
<div class="a" style="left:727px;top:555px;width:10px;height:1px;background-image:linear-gradient(90deg,#999 50%, transparent 50%);background-size:2px 1px;"></div>
<div class="a" style="left:737px;top:537px;width:100px;height:38px;background:#fff;border:1px solid #c0c0c0;box-sizing:border-box;"></div>
<svg class="a" style="left:742px;top:547px;" width="92" height="24" viewBox="0 0 92 24"><circle cx="2.5" cy="4" r="2.2" fill="#000"/><circle cx="2.5" cy="20" r="2.2" fill="#000"/><path d="M16 4 H90 M16 20 H90" stroke="#bbb" stroke-width="1.5"/></svg>
<div class="t" style="left:842px;top:538.99px;font-size:13px;color:#000;font-weight:bold;">Bullete...</div>
<div class="t" style="left:842px;top:556.84px;font-size:12px;color:#000;transform:scaleX(0.93);transform-origin:0 0;">Bulleted,...</div>
<svg class="a" style="left:902px;top:551px;" width="9" height="9" viewBox="0 0 9 9"><path d="M0 1 H1.5 M3 1 H9 M0 4.5 H1.5 M3 4.5 H9 M0 8 H1.5 M3 8 H9" stroke="#000" stroke-width="1.3"/></svg>
<div class="a" style="left:737px;top:585px;width:100px;height:10px;background:#fff;border:1px solid #c0c0c0;border-bottom:none;box-sizing:border-box;"></div>
<div class="a" style="left:842px;top:586px;width:80px;height:9px;overflow:hidden;"><div class="t" style="left:0;top:3px;font-size:13px;font-weight:bold;">Numbe...</div></div>
<div class="a" style="left:712px;top:594px;width:222px;height:28px;background:#f0f0f0;"></div>
<div class="a" style="left:717px;top:595px;width:69px;height:26px;background:#dcdcdc;"></div>
<svg class="a" style="left:726px;top:600px;" width="16" height="16" viewBox="0 0 16 16"><path d="M0.5 11 L4.5 0.5 L8.5 11 M2 7.5 H7" fill="none" stroke="#8a3cb8" stroke-width="1.6"/><path d="M5 15.5 L9.5 4.5 L14 15.5 M6.5 11.5 H12.5" fill="none" stroke="#3a7cc8" stroke-width="1.6"/></svg>
<div class="t" style="left:748px;top:601.84px;font-size:12px;color:#1e3a6e;transform:scaleX(0.89);transform-origin:0 0;">Styles</div>
<svg class="a" style="left:796px;top:600px;" width="16" height="16" viewBox="0 0 16 16"><path d="M0.5 0.5 H8 L11 3.5 V13.5 H0.5 Z" fill="#fff" stroke="#999"/><path d="M2 4 H8 M2 7 H6 M2 10 H5" stroke="#bbb"/><circle cx="11.5" cy="9.5" r="3.2" fill="#f2c14a" stroke="#c8901a"/><path d="M9.5 12 L6 15.5" stroke="#d89f2a" stroke-width="2"/></svg>
<div class="t" style="left:817px;top:601.84px;font-size:12px;color:#1e3a6e;transform:scaleX(0.9);transform-origin:0 0;">Keywords</div>
<div class="t" style="left:14px;top:631.84px;font-size:12px;color:#000;transform:scaleX(0.9);transform-origin:0 0;">Ln 17 Col 4</div>
<div class="t" style="left:108px;top:631.84px;font-size:12px;color:#000;transform:scaleX(0.9);transform-origin:0 0;">Modified</div>
<svg class="a" style="left:181px;top:629px;" width="17" height="17" viewBox="0 0 17 17"><circle cx="7.5" cy="7.5" r="6.5" fill="none" stroke="#999" stroke-width="1.1"/><path d="M1 7.5 H14 M7.5 1 V14 M3 3.5 Q7.5 6 12 3.5 M3 11.5 Q7.5 9 12 11.5" fill="none" stroke="#999" stroke-width="0.8"/><rect x="8" y="9" width="9" height="8" fill="#3d86d6"/><text x="12.5" y="15.5" font-size="6" font-family="Liberation Sans" font-weight="bold" fill="#fff" text-anchor="middle">AB</text></svg>
<div class="t" style="left:200px;top:629.84px;font-size:12px;color:#000;transform:scaleX(0.975);transform-origin:0 0;">English (United States)</div>
<div class="t" style="left:356px;top:630.84px;font-size:12px;color:#000;transform:scaleX(0.94);transform-origin:0 0;">14 item(s)</div>
<div class="a" style="left:744px;top:627px;width:65px;height:22px;background:#fff;border:1px solid #b8b8b8;box-sizing:border-box;"></div>
<svg class="a" style="left:747px;top:630px;" width="13" height="13" viewBox="0 0 13 13"><circle cx="5" cy="5" r="4" fill="#cfe3f7" stroke="#4a86c6" stroke-width="1.3"/><path d="M8 8 L12 12" stroke="#d8a030" stroke-width="2.2"/></svg>
<div class="t" style="left:762px;top:632.84px;font-size:12px;color:#000;transform:scaleX(0.9);transform-origin:0 0;">100%</div>
<svg class="a" style="left:796px;top:637px;" width="6" height="3" viewBox="0 0 6 3"><path d="M0 0 L6 0 L3.0 3 Z" fill="#888"/></svg>
<div class="t" style="left:818px;top:632.69px;font-size:11px;color:#a0a0a0;transform:scaleX(0.87);transform-origin:0 0;">CAPS</div>
<div class="t" style="left:855px;top:632.69px;font-size:11px;color:#000;transform:scaleX(0.9);transform-origin:0 0;">NUM</div>
<div class="t" style="left:888px;top:632.69px;font-size:11px;color:#a0a0a0;transform:scaleX(0.89);transform-origin:0 0;">INS</div>
<svg class="a" style="left:922px;top:634px;" width="10" height="10" viewBox="0 0 10 10"><g fill="#a0a0a0"><rect x="8" y="0" width="2" height="2"/><rect x="4" y="4" width="2" height="2"/><rect x="8" y="4" width="2" height="2"/><rect x="0" y="8" width="2" height="2"/><rect x="4" y="8" width="2" height="2"/><rect x="8" y="8" width="2" height="2"/></g></svg>
<div class="a" style="left:92px;top:27px;width:528px;height:597px;background:#f0f0f0;border:1px solid #1a7ad0;box-sizing:border-box;"></div>
<div class="a" style="left:92px;top:27px;width:528px;height:32px;background:#0063b1;"></div>
<div class="t" style="left:101px;top:37.84px;font-size:12px;color:#fff;">Style</div>
<svg class="a" style="left:599px;top:38px;" width="10" height="10" viewBox="0 0 10 10"><path d="M0.5 0.5 L9.5 9.5 M9.5 0.5 L0.5 9.5" stroke="#fff" stroke-width="1.2"/></svg>
<div class="t" style="left:100px;top:68.69px;font-size:11px;color:#000;">Properties</div>
<div class="a" style="left:154px;top:74px;width:459px;height:1px;background:#a0a0a0;"></div>
<div class="t" style="left:108px;top:87.69px;font-size:11px;color:#8d8d8d;"><u>N</u>ame:</div>
<div class="t" style="left:108px;top:114.69px;font-size:11px;color:#8d8d8d;">Style <u>T</u>ype:</div>
<div class="t" style="left:108px;top:141.69px;font-size:11px;color:#8d8d8d;"><u>B</u>ased on Style:</div>
<div class="t" style="left:108px;top:168.69px;font-size:11px;color:#000;"><u>V</u>iew:</div>
<div class="a" style="left:223px;top:83px;width:388px;height:21px;background:#fff;border:1px solid #cdcdcd;box-sizing:border-box;"></div>
<div class="t" style="left:226px;top:87.69px;font-size:11px;color:#6d6d6d;">Table</div>
<div class="a" style="left:223px;top:110px;width:388px;height:23px;background:#fff;border:1px solid #cdcdcd;box-sizing:border-box;"></div>
<svg class="a" style="left:229px;top:116px;" width="11" height="11" viewBox="0 0 11 11"><rect x="0.5" y="0.5" width="10" height="10" fill="none" stroke="#000"/><path d="M5.5 0 V11 M0 5.5 H11" stroke="#000"/></svg>
<div class="t" style="left:243px;top:115.69px;font-size:11px;color:#6d6d6d;">Table</div>
<svg class="a" style="left:598px;top:119px;" width="8" height="5" viewBox="0 0 8 5"><path d="M0.5 0.5 L4.0 4.5 L7.5 0.5" fill="none" stroke="#a8a8a8" stroke-width="1.1"/></svg>
<div class="a" style="left:223px;top:137px;width:388px;height:23px;background:#fff;border:1px solid #cdcdcd;box-sizing:border-box;"></div>
<div class="t" style="left:244px;top:142.69px;font-size:11px;color:#6d6d6d;">(none)</div>
<svg class="a" style="left:598px;top:146px;" width="8" height="5" viewBox="0 0 8 5"><path d="M0.5 0.5 L4.0 4.5 L7.5 0.5" fill="none" stroke="#a8a8a8" stroke-width="1.1"/></svg>
<div class="a" style="left:223px;top:164px;width:388px;height:21px;background:#e1e1e1;border:1px solid #adadad;box-sizing:border-box;"></div>
<div class="t" style="left:227px;top:168.69px;font-size:11px;color:#000;">Default View</div>
<svg class="a" style="left:598px;top:172px;" width="8" height="5" viewBox="0 0 8 5"><path d="M0.5 0.5 L4.0 4.5 L7.5 0.5" fill="none" stroke="#333" stroke-width="1.2"/></svg>
<div class="a" style="left:223px;top:193px;width:13px;height:13px;background:#fff;border:1px solid #cdcdcd;box-sizing:border-box;"></div>
<div class="t" style="left:239px;top:194.69px;font-size:11px;color:#8d8d8d;">Use alternative settings for this view</div>
<div class="t" style="left:100px;top:212.69px;font-size:11px;color:#000;">Formatting</div>
<div class="a" style="left:157px;top:218px;width:456px;height:1px;background:#a0a0a0;"></div>
<div class="t" style="left:109px;top:234.69px;font-size:11px;color:#000;">A<u>p</u>ply formatting to:</div>
<div class="a" style="left:223px;top:230px;width:388px;height:21px;background:#e1e1e1;border:1px solid #adadad;box-sizing:border-box;"></div>
<div class="t" style="left:226px;top:234.69px;font-size:11px;color:#000;">Header row</div>
<svg class="a" style="left:598px;top:238px;" width="8" height="5" viewBox="0 0 8 5"><path d="M0.5 0.5 L4.0 4.5 L7.5 0.5" fill="none" stroke="#333" stroke-width="1.2"/></svg>
<div class="a" style="left:111px;top:260px;width:160px;height:22px;background:#fff;border:1px solid #b8b8b8;box-sizing:border-box;"></div>
<svg class="a" style="left:258px;top:270px;" width="6" height="3" viewBox="0 0 6 3"><path d="M0 0 L6 0 L3.0 3 Z" fill="#888"/></svg>
<div class="a" style="left:271px;top:260px;width:100px;height:22px;background:#fff;border:1px solid #b8b8b8;box-sizing:border-box;"></div>
<div class="t" style="left:274px;top:265.69px;font-size:11px;color:#333;">22</div>
<svg class="a" style="left:358px;top:270px;" width="6" height="3" viewBox="0 0 6 3"><path d="M0 0 L6 0 L3.0 3 Z" fill="#888"/></svg>
<div class="a" style="left:373px;top:262px;width:1px;height:18px;background:#d0d0d0;"></div>
<div class="t" style="left:381px;top:263.94px;font-size:15px;color:#2b4f9e;font-weight:bold;font-family:'Liberation Serif', serif;">B</div>
<div class="t" style="left:405px;top:263.94px;font-size:15px;color:#2b4f9e;font-weight:bold;font-family:'Liberation Serif', serif;font-style:italic;">I</div>
<div class="t" style="left:427px;top:263.44px;font-size:15px;color:#2b4f9e;font-weight:bold;font-family:'Liberation Serif', serif;">U</div>
<div class="a" style="left:427px;top:277px;width:11px;height:1px;background:#2b4f9e;"></div>
<div class="t" style="left:451px;top:263.94px;font-size:15px;color:#2b4f9e;font-weight:bold;font-family:'Liberation Serif', serif;">S</div>
<div class="a" style="left:450px;top:270px;width:12px;height:1px;background:#2b4f9e;"></div>
<div class="a" style="left:470px;top:262px;width:1px;height:18px;background:#d0d0d0;"></div>
<div class="t" style="left:476px;top:260.44px;font-size:15px;color:#2e56a6;font-weight:bold;font-family:'Liberation Serif', serif;">A</div>
<div class="a" style="left:476px;top:275px;width:16px;height:4px;background:#c0504d;"></div>
<svg class="a" style="left:495px;top:269px;" width="5" height="3" viewBox="0 0 5 3"><path d="M0 0 L5 0 L2.5 3 Z" fill="#333"/></svg>
<svg class="a" style="left:508px;top:262px;" width="18" height="17" viewBox="0 0 18 17"><rect x="0" y="0" width="8" height="8" fill="#d8e800"/><text x="0.5" y="7" font-size="7" font-family="Liberation Sans" fill="#333">ab</text><path d="M6 12 L7 9 L14 2 L16 4 L9 11 Z" fill="#8ecf30" stroke="#4a8a10" stroke-width="0.7"/><rect x="0" y="13" width="16" height="4" fill="#fff"/></svg>
<svg class="a" style="left:528px;top:269px;" width="5" height="3" viewBox="0 0 5 3"><path d="M0 0 L5 0 L2.5 3 Z" fill="#333"/></svg>
<div class="a" style="left:111px;top:287px;width:100px;height:22px;background:#fff;border:1px solid #b8b8b8;box-sizing:border-box;"></div>
<div class="a" style="left:122px;top:298px;width:61px;height:1px;background:#000;"></div>
<svg class="a" style="left:198px;top:297px;" width="6" height="3" viewBox="0 0 6 3"><path d="M0 0 L6 0 L3.0 3 Z" fill="#888"/></svg>
<div class="a" style="left:210px;top:287px;width:101px;height:22px;background:#fff;border:1px solid #b8b8b8;box-sizing:border-box;"></div>
<div class="t" style="left:217px;top:291.95px;font-size:12px;color:#000;font-family:'Liberation Serif', serif;">1px</div>
<div class="a" style="left:240px;top:298px;width:48px;height:1px;background:#000;"></div>
<svg class="a" style="left:297px;top:297px;" width="6" height="3" viewBox="0 0 6 3"><path d="M0 0 L6 0 L3.0 3 Z" fill="#888"/></svg>
<svg class="a" style="left:315px;top:290px;" width="12" height="12" viewBox="0 0 12 12"><rect x="0.5" y="0.5" width="11" height="11" fill="none" stroke="#555"/><path d="M6.5 0 V12 M0 6.5 H12" stroke="#555"/></svg>
<div class="a" style="left:314px;top:302px;width:16px;height:4px;background:#000;"></div>
<svg class="a" style="left:332px;top:296px;" width="6" height="3" viewBox="0 0 6 3"><path d="M0 0 L6 0 L3.0 3 Z" fill="#333"/></svg>
<div class="a" style="left:344px;top:287px;width:34px;height:22px;background:#c8c8c8;"></div>
<div class="a" style="left:367px;top:287px;width:11px;height:22px;background:#bdbdbd;"></div>
<div class="a" style="left:366px;top:287px;width:1px;height:22px;background:#a8a8a8;"></div>
<svg class="a" style="left:348px;top:292px;" width="13" height="12" viewBox="0 0 13 12"><rect x="0.5" y="0.5" width="12" height="11" fill="#fff" stroke="#666"/><path d="M6.5 0 V12 M0 6 H13" stroke="#666"/></svg>
<svg class="a" style="left:369px;top:296px;" width="6" height="3" viewBox="0 0 6 3"><path d="M0 0 L6 0 L3.0 3 Z" fill="#333"/></svg>
<div class="a" style="left:380px;top:289px;width:1px;height:18px;background:#d0d0d0;"></div>
<svg class="a" style="left:388px;top:290px;" width="12" height="11" viewBox="0 0 12 11"><rect x="0" y="0" width="12" height="11" fill="#777"/><g fill="#e8e8e8"><rect x="1" y="1" width="2" height="2"/><rect x="4" y="1" width="2" height="2"/><rect x="7" y="1" width="2" height="2"/><rect x="2.5" y="4.5" width="2" height="2"/><rect x="5.5" y="4.5" width="2" height="2"/><rect x="8.5" y="4.5" width="2" height="2"/><rect x="1" y="8" width="2" height="2"/><rect x="4" y="8" width="2" height="2"/><rect x="7" y="8" width="2" height="2"/></g></svg>
<div class="a" style="left:386px;top:302px;width:16px;height:4px;background:#000;"></div>
<svg class="a" style="left:405px;top:296px;" width="6" height="3" viewBox="0 0 6 3"><path d="M0 0 L6 0 L3.0 3 Z" fill="#333"/></svg>
<div class="a" style="left:418px;top:289px;width:1px;height:18px;background:#d0d0d0;"></div>
<svg class="a" style="left:424px;top:290px;" width="16" height="14" viewBox="0 0 16 14"><rect x="0.5" y="0.5" width="15" height="13" fill="#fff" stroke="#3a6ab0"/><rect x="1" y="12" width="14" height="1.5" fill="#b8c8dc"/><path d="M2.5 3.5 H12 M2.5 5.5 H9 M2.5 7.5 H12" stroke="#333"/></svg>
<svg class="a" style="left:446px;top:296px;" width="6" height="3" viewBox="0 0 6 3"><path d="M0 0 L6 0 L3.0 3 Z" fill="#333"/></svg>
<div class="a" style="left:108px;top:321px;width:503px;height:200px;background:#fff;border:1px solid #696969;box-sizing:border-box;"></div>
<div class="a" style="left:109px;top:406px;width:500px;height:19px;background:#d7e4bc;"></div>
<div class="a" style="left:109px;top:444px;width:500px;height:19px;background:#d7e4bc;"></div>
<div class="a" style="left:109px;top:360px;width:500px;height:1px;background:#000;"></div>
<div class="a" style="left:109px;top:406px;width:500px;height:1px;background:#000;"></div>
<div class="a" style="left:109px;top:425px;width:500px;height:1px;background:#000;"></div>
<div class="a" style="left:109px;top:444px;width:500px;height:1px;background:#000;"></div>
<div class="a" style="left:109px;top:463px;width:500px;height:1px;background:#000;"></div>
<div class="a" style="left:109px;top:482px;width:500px;height:1px;background:#000;"></div>
<div class="a" style="left:109px;top:360px;width:1px;height:123px;background:#000;"></div>
<div class="a" style="left:199px;top:360px;width:1px;height:123px;background:#000;"></div>
<div class="a" style="left:294px;top:360px;width:1px;height:123px;background:#000;"></div>
<div class="a" style="left:392px;top:360px;width:1px;height:123px;background:#000;"></div>
<div class="a" style="left:491px;top:360px;width:1px;height:123px;background:#000;"></div>
<div class="a" style="left:608px;top:360px;width:1px;height:123px;background:#000;"></div>
<div class="t" style="left:199px;width:95px;text-align:center;top:370.87px;font-size:28.5px;color:#c0504d;transform:scaleX(0.95);">Jan</div>
<div class="t" style="left:294px;width:98px;text-align:center;top:370.87px;font-size:28.5px;color:#c0504d;transform:scaleX(0.95);">Feb</div>
<div class="t" style="left:392px;width:99px;text-align:center;top:370.87px;font-size:28.5px;color:#c0504d;transform:scaleX(0.97);">Mar</div>
<div class="t" style="left:491px;width:117px;text-align:center;top:370.87px;font-size:28.5px;color:#c0504d;transform:scaleX(1.07);">Total</div>
<div class="t" style="left:109px;width:90px;text-align:center;top:410.15px;font-size:14px;color:#000;">East</div>
<div class="t" style="left:200px;top:409.72px;font-size:14.5px;color:#000;">7</div>
<div class="t" style="left:295px;top:409.72px;font-size:14.5px;color:#000;">7</div>
<div class="t" style="left:393px;top:409.72px;font-size:14.5px;color:#000;">5</div>
<div class="t" style="left:492px;top:409.18px;font-size:16.5px;color:#000;font-family:'Liberation Serif', serif;">19</div>
<div class="t" style="left:109px;width:90px;text-align:center;top:429.15px;font-size:14px;color:#000;">West</div>
<div class="t" style="left:200px;top:428.72px;font-size:14.5px;color:#000;">6</div>
<div class="t" style="left:295px;top:428.72px;font-size:14.5px;color:#000;">4</div>
<div class="t" style="left:393px;top:428.72px;font-size:14.5px;color:#000;">7</div>
<div class="t" style="left:492px;top:428.18px;font-size:16.5px;color:#000;font-family:'Liberation Serif', serif;">17</div>
<div class="t" style="left:109px;width:90px;text-align:center;top:448.15px;font-size:14px;color:#000;">South</div>
<div class="t" style="left:200px;top:447.72px;font-size:14.5px;color:#000;">8</div>
<div class="t" style="left:295px;top:447.72px;font-size:14.5px;color:#000;">7</div>
<div class="t" style="left:393px;top:447.72px;font-size:14.5px;color:#000;">9</div>
<div class="t" style="left:492px;top:447.18px;font-size:16.5px;color:#000;font-family:'Liberation Serif', serif;">24</div>
<div class="t" style="left:109px;width:90px;text-align:center;top:466.30px;font-size:15px;font-weight:bold;color:#000;transform:scaleX(1.12);">Total</div>
<div class="t" style="left:200px;top:464.76px;font-size:17px;color:#000;font-weight:bold;font-family:'Liberation Serif', serif;transform:scaleX(1.2);transform-origin:0 0;">21</div>
<div class="t" style="left:295px;top:464.76px;font-size:17px;color:#000;font-weight:bold;font-family:'Liberation Serif', serif;transform:scaleX(1.2);transform-origin:0 0;">18</div>
<div class="t" style="left:393px;top:464.76px;font-size:17px;color:#000;font-weight:bold;font-family:'Liberation Serif', serif;transform:scaleX(1.2);transform-origin:0 0;">21</div>
<div class="t" style="left:492px;top:464.76px;font-size:17px;color:#000;font-weight:bold;font-family:'Liberation Serif', serif;transform:scaleX(1.2);transform-origin:0 0;">60</div>
<div class="a" style="left:108px;top:528px;width:503px;height:58px;background:#f0f0f0;border:1px solid #8c8c8c;box-sizing:border-box;"></div>
<div class="t" style="left:111px;top:532.69px;font-size:11px;color:#000;">Table:</div>
<div class="t" style="left:123px;top:545.69px;font-size:11px;color:#000;">Width: 100%</div>
<div class="t" style="left:123px;top:558.69px;font-size:11px;color:#000;">Borders: Collapse</div>
<div class="a" style="left:109px;top:529px;width:501px;height:56px;border:1px solid #fff;box-sizing:border-box;"></div>
<div class="a" style="left:592px;top:530px;width:1px;height:54px;background:#fff;"></div>
<svg class="a" style="left:597px;top:536px;" width="8" height="5" viewBox="0 0 8 5"><path d="M0.5 4.5 L4.0 0.5 L7.5 4.5" fill="none" stroke="#555" stroke-width="1.8"/></svg>
<div class="a" style="left:593px;top:547px;width:15px;height:17px;background:#cdcdcd;"></div>
<svg class="a" style="left:597px;top:572px;" width="8" height="5" viewBox="0 0 8 5"><path d="M0.5 0.5 L4.0 4.5 L7.5 0.5" fill="none" stroke="#555" stroke-width="1.8"/></svg>
<div class="a" style="left:102px;top:594px;width:73px;height:21px;background:#e1e1e1;border:1px solid #adadad;box-sizing:border-box;"></div>
<div class="t" style="left:111px;top:598.69px;font-size:11px;color:#000;">Format</div>
<svg class="a" style="left:163px;top:603px;" width="7" height="4" viewBox="0 0 7 4"><path d="M0 0 L7 0 L3.5 4 Z" fill="#000"/></svg>
<div class="a" style="left:375px;top:594px;width:73px;height:21px;background:#e1e1e1;border:2px solid #0078d7;box-sizing:border-box;"></div>
<div class="t" style="left:375px;width:73px;text-align:center;top:598.69px;font-size:11px;color:#000;">OK</div>
<div class="a" style="left:456px;top:594px;width:73px;height:21px;background:#e1e1e1;border:1px solid #adadad;box-sizing:border-box;"></div>
<div class="t" style="left:456px;width:73px;text-align:center;top:598.69px;font-size:11px;color:#000;">Cancel</div>
<div class="a" style="left:537px;top:594px;width:73px;height:21px;background:#e1e1e1;border:1px solid #adadad;box-sizing:border-box;"></div>
<div class="t" style="left:537px;width:73px;text-align:center;top:598.69px;font-size:11px;color:#000;">Help</div>
<div class="a" style="left:712px;top:481px;width:207px;height:54px;border:2px solid #ff4444;box-sizing:border-box;"></div>
<div class="a" style="left:88px;top:23px;width:536px;height:605px;border:3px solid #ff4040;box-sizing:border-box;"></div>
<svg class="a" style="left:0;top:0" width="938" height="651" viewBox="0 0 938 651"><defs><filter id="sh" x="-20%" y="-20%" width="140%" height="140%"><feGaussianBlur in="SourceAlpha" stdDeviation="1.5"/><feOffset dx="1" dy="2"/><feComponentTransfer><feFuncA type="linear" slope="0.35"/></feComponentTransfer><feMerge><feMergeNode/><feMergeNode in="SourceGraphic"/></feMerge></filter></defs><g filter="url(#sh)"><path d="M648.4 429.2 L793.8 475.2" stroke="#ff4040" stroke-width="8" stroke-dasharray="8 8.06" fill="none"/><path d="M624.5 421.5 L667.3 415 L669 422.3 L641.8 427.3 L660.7 446.5 L655.7 451.7 Z" fill="#ff4040"/><circle cx="814.5" cy="481" r="7.4" fill="#ff4040"/></g></svg>
</body></html>
